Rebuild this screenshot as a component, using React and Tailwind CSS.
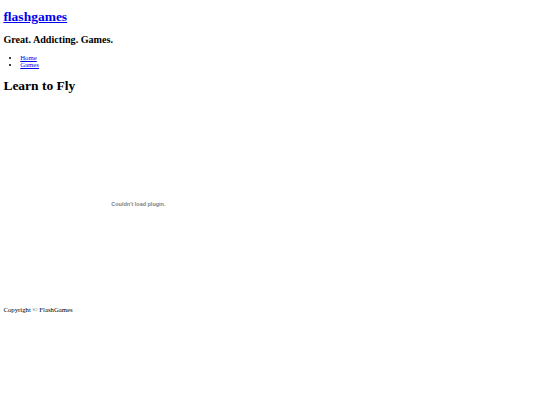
import React from 'react';

const App = () => {
  return (
    <div className="bg-white min-h-[405px] w-[540px] overflow-hidden">
      {/* page rendered at 1280px width, shrunk to fit */}
      <div className="[zoom:0.421875] w-[1280px] px-2 pt-px font-['Liberation_Serif',serif] text-[16px] text-black">
        <h1 className="text-[32px] font-bold mt-[20.44px] mb-[21.44px] leading-[1.15]">
          <a href="#" className="text-[#0000ee] underline">flashgames</a>
        </h1>
        <h2 className="text-[24px] font-bold my-[19.92px] leading-[1.15]">Great. Addicting. Games.</h2>
        <ul className="list-disc pl-10 my-4 leading-[1.15]">
          <li><a href="#" className="text-[#0000ee] underline">Home</a></li>
          <li><a href="#" className="text-[#0000ee] underline">Games</a></li>
        </ul>
        <h1 className="text-[32px] font-bold my-[21.44px] leading-[1.15]">Learn to Fly</h1>
        <div className="w-[640px] h-[480px] flex items-center justify-center">
          <span className="font-['Liberation_Sans',Arial,sans-serif] text-[13px] font-bold text-[#808080]">Couldn't load plugin.</span>
        </div>
        <p className="mt-[2px] mb-4 leading-[1.15]">Copyright © FlashGames</p>
      </div>
    </div>
  );
};

export default App;
